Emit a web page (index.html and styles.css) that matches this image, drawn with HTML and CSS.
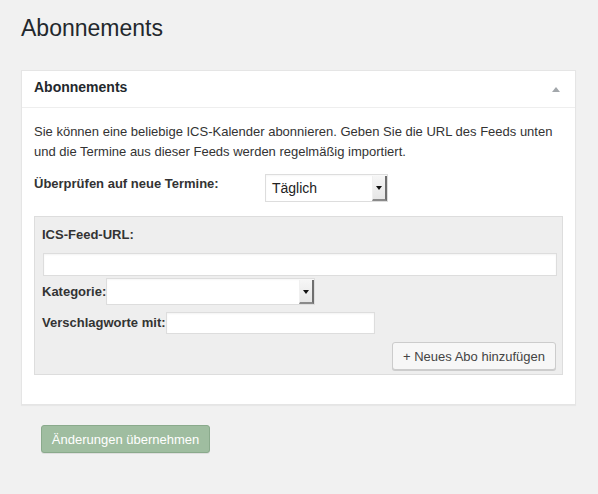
FILE: index.html
```html
<!DOCTYPE html>
<html lang="de">
<head>
<meta charset="utf-8">
<title>Abonnements</title>
<link rel="stylesheet" href="styles.css">
</head>
<body>
<div class="wrap">
  <h1 class="page-title">Abonnements</h1>
  <div class="postbox">
    <div class="postbox-head">
      <span class="postbox-title">Abonnements</span>
      <span class="toggle"></span>
    </div>
    <div class="postbox-body">
      <p class="intro">Sie können eine beliebige ICS-Kalender abonnieren. Geben Sie die URL des Feeds unten und die Termine aus dieser Feeds werden regelmäßig importiert.</p>
      <div class="check-row">
        <span class="label">Überprüfen auf neue Termine:</span>
        <div class="select select-freq"><span class="select-text">Täglich</span><span class="select-btn"><span class="caret"></span></span></div>
      </div>
      <div class="feed-box">
        <div class="label feed-label">ICS-Feed-URL:</div>
        <div class="input input-url"></div>
        <div class="inline-row cat-row">
          <span class="label">Kategorie:</span>
          <div class="select select-cat"><span class="select-text"></span><span class="select-btn"><span class="caret"></span></span></div>
        </div>
        <div class="inline-row tag-row">
          <span class="label">Verschlagworte mit:</span>
          <div class="input input-tags"></div>
        </div>
        <div class="btn-row">
          <button class="btn-secondary">+ Neues Abo hinzufügen</button>
        </div>
      </div>
    </div>
  </div>
  <button class="btn-primary">Änderungen übernehmen</button>
</div>
</body>
</html>
```
FILE: styles.css
```css
* { box-sizing: border-box; }
html, body { margin: 0; padding: 0; }
body {
  background: #f1f1f1;
  font-family: "Liberation Sans", Arial, sans-serif;
  font-size: 13px;
  color: #333;
  width: 598px;
  height: 494px;
  overflow: hidden;
}
.wrap { padding: 0 22px 0 21px; }
.page-title {
  margin: 0;
  padding-top: 13px;
  font-size: 23px;
  line-height: 30px;
  font-weight: 400;
  color: #23282d;
}
.postbox {
  margin-top: 27px;
  width: 555px;
  background: #fff;
  border: 1px solid #e5e5e5;
  box-shadow: 0 1px 1px rgba(0,0,0,0.04);
}
.postbox-head {
  height: 37px;
  padding: 0 15px 0 12px;
  border-bottom: 1px solid #eee;
  display: flex;
  justify-content: space-between;
  align-items: flex-start;
}
.postbox-title {
  font-size: 14px;
  font-weight: 700;
  line-height: 32px;
  color: #23282d;
}
.toggle {
  margin-top: 16px;
  width: 0; height: 0;
  border-left: 4px solid transparent;
  border-right: 4px solid transparent;
  border-bottom: 5px solid #a3a7ab;
}
.postbox-body { padding: 14px 12px 29px; }
.intro { margin: 0; line-height: 20px; color: #333; }
.label { font-weight: 700; color: #333; line-height: 20px; }
.check-row {
  margin-top: 12px;
  display: grid;
  grid-template-columns: 231px auto;
  align-items: start;
}
.select {
  display: flex;
  background: #fff;
  border: 1px solid #ddd;
  box-shadow: inset 0 1px 2px rgba(0,0,0,0.04);
}
.select-text {
  flex: 1;
  padding-left: 6px;
  font-size: 14px;
  line-height: 26px;
  color: #222;
}
.select-btn {
  width: 15px;
  margin: 1px 0 0 0;
  background: linear-gradient(#f6f6f6, #e6e6e6);
  border-left: 1px solid #f0f0f0;
  border-right: 2px solid #6f6f6f;
  border-bottom: 2px solid #8a8a8a;
  display: flex;
  align-items: center;
  justify-content: center;
}
.caret {
  width: 0; height: 0;
  border-left: 3px solid transparent;
  border-right: 3px solid transparent;
  border-top: 4px solid #111;
  margin-top: 1px;
}
.select-freq { width: 123px; height: 28px; }
.feed-box {
  margin-top: 14px;
  background: #eee;
  border: 1px solid #ddd;
  padding: 8px 5px 4px 7px;
}
.feed-label { display: block; }
.input {
  background: #fff;
  border: 1px solid #ddd;
  box-shadow: inset 0 1px 2px rgba(0,0,0,0.05);
}
.input-url { margin: 8px 0 0 1px; height: 23px; }
.inline-row { display: flex; align-items: center; gap: 0; }
.cat-row { margin-top: 2px; }
.select-cat { width: 209px; height: 27px; }
.tag-row { margin-top: 7px; }
.input-tags { width: 209px; height: 22px; }
.btn-row { display: flex; justify-content: flex-end; margin-top: 8px; }
.btn-secondary {
  margin-right: 1px;
  width: 164px;
  height: 28px;
  padding: 0;
  font-family: "Liberation Sans", Arial, sans-serif;
  font-size: 13px;
  color: #444;
  background: #f7f7f7;
  border: 1px solid #ccc;
  border-radius: 3px;
  box-shadow: 0 1px 0 #ccc;
}
.btn-primary {
  display: block;
  margin: 20px 0 0 20px;
  width: 169px;
  height: 28px;
  padding: 0;
  font-family: "Liberation Sans", Arial, sans-serif;
  font-size: 13px;
  color: #fff;
  background: #9fbda0;
  border: 1px solid #8aaa8c;
  border-radius: 3px;
  box-shadow: 0 1px 0 rgba(0,0,0,0.08);
}
```
